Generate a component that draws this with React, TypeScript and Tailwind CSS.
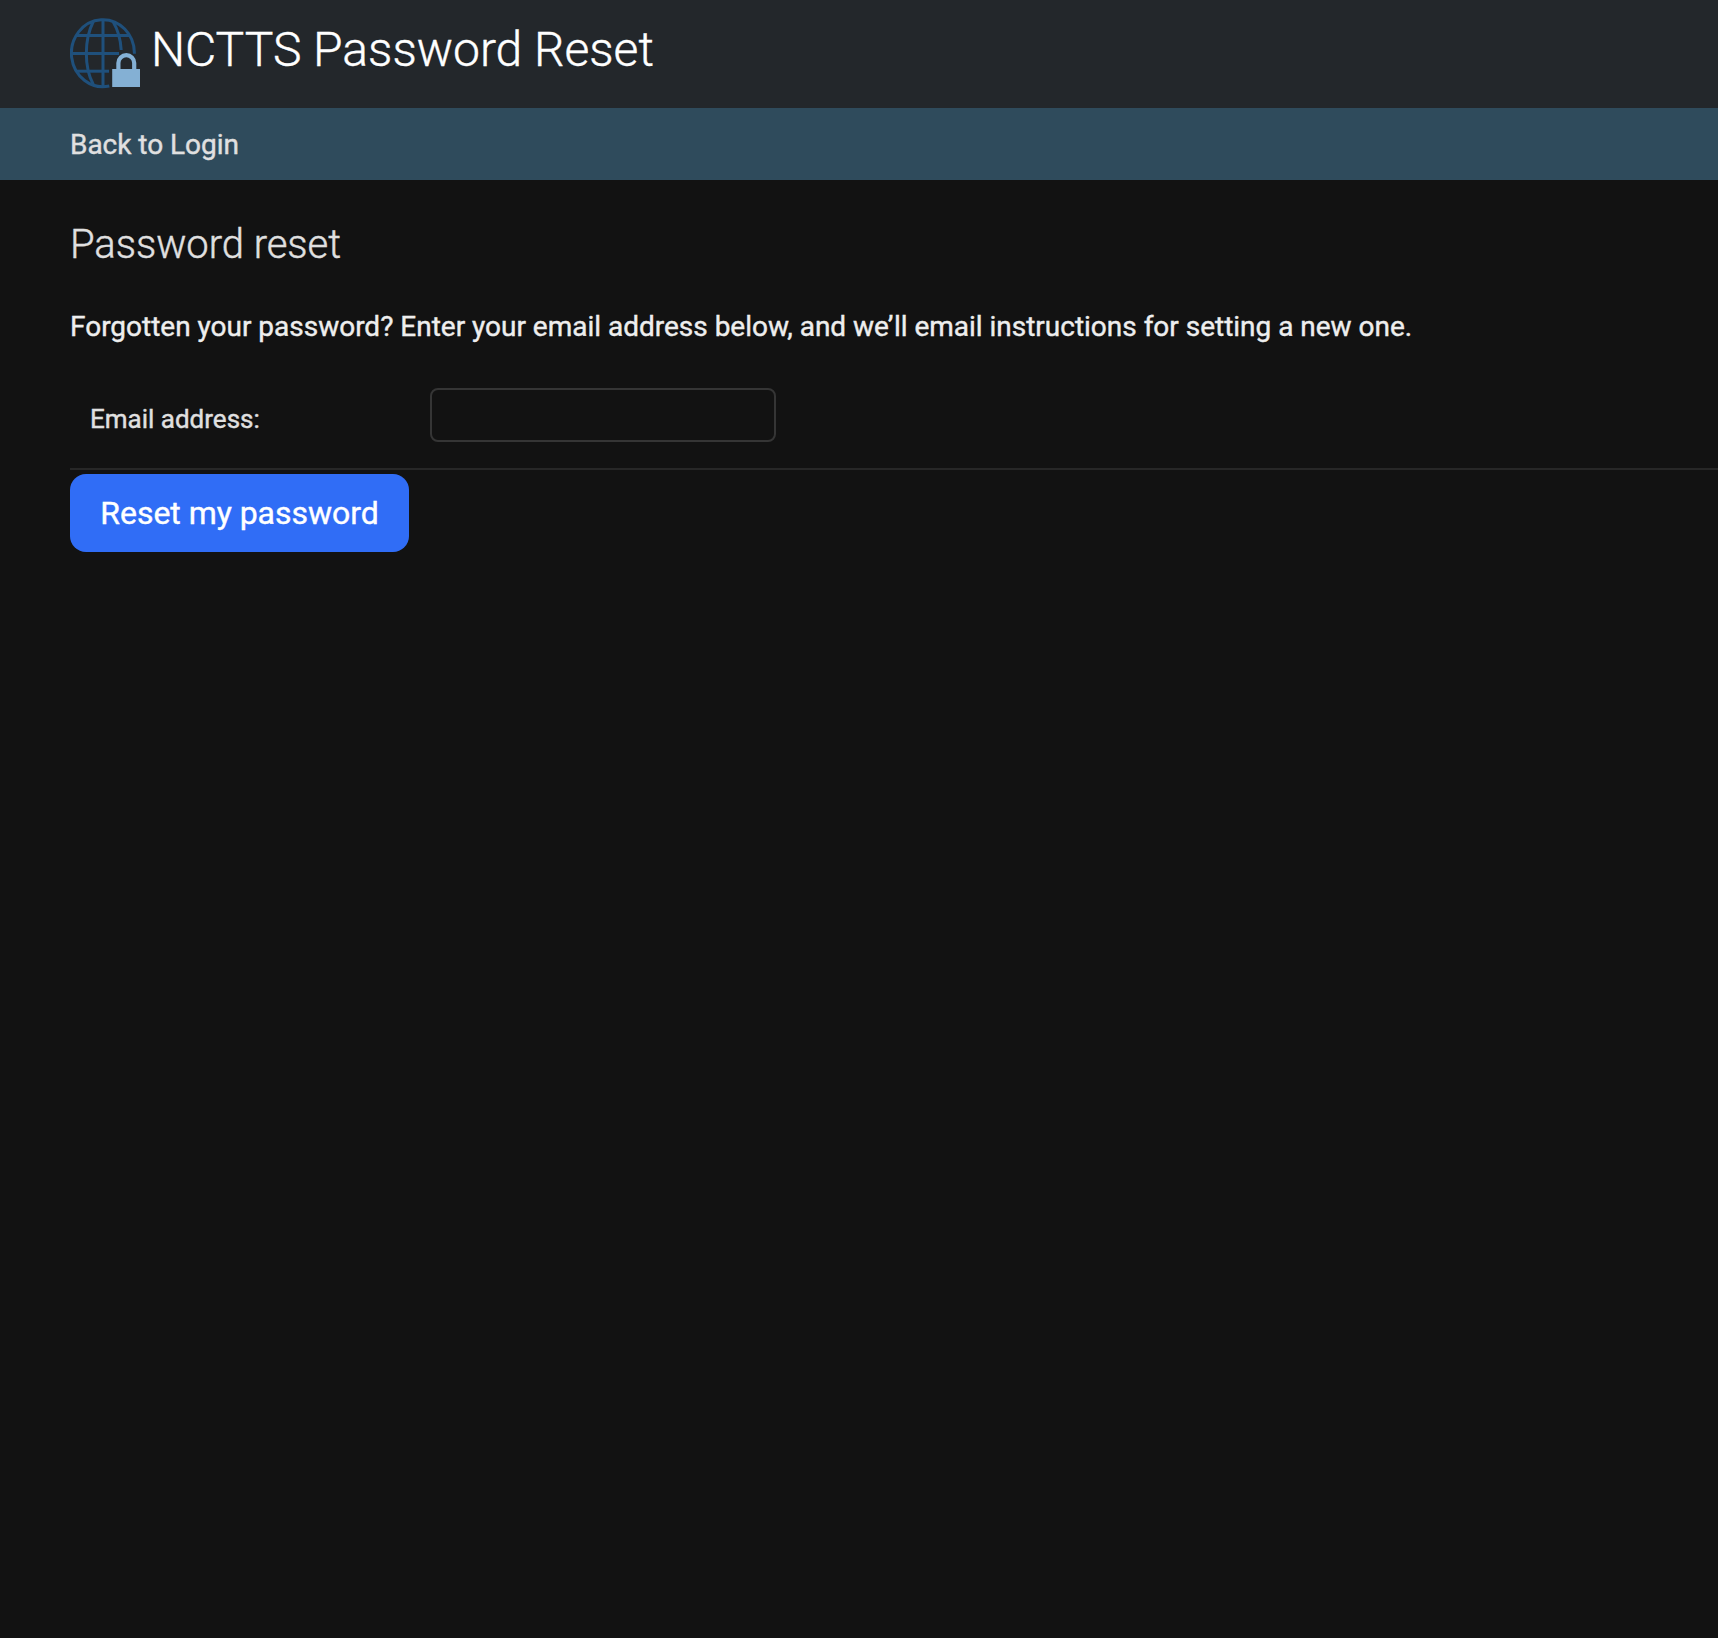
function GlobeLock() {
  return (
    <svg className="block h-[72px] w-[72px] shrink-0" viewBox="0 0 72 72" fill="none">
      <g stroke="#1f507c" strokeWidth="3">
        <path d="M39.3 69 A31.5 33.5 0 1 1 64.4 36.8" />
        <path d="M33 2 V70" />
        <path d="M23.3 4.5 C14 23 14 50 23.3 67.5" />
        <path d="M43 4.5 C48 13 50.6 22 51.2 33" />
        <path d="M7 18.6 H59" />
        <path d="M1 36.4 H49" />
        <path d="M7 54.2 H39" />
      </g>
      <path d="M48.4 54 V46 A7.9 7.9 0 0 1 64.2 46 V54" stroke="#84b0d4" strokeWidth="4.2" />
      <rect x="42.2" y="52" width="27.8" height="18" fill="#84b0d4" />
    </svg>
  );
}

export default function App() {
  return (
    <div className="min-h-screen bg-[#121212] font-['Roboto',sans-serif] text-[#eeeeee] [-webkit-text-stroke:0.4px_currentColor]">
      <header className="flex h-[108px] items-start bg-[#23272b] px-[70px] pt-[17px]">
        <GlobeLock />
        <h1 className="mt-[5px] ml-[9px] text-[48px] leading-[56px] font-light whitespace-nowrap text-white">
          NCTTS Password Reset
        </h1>
      </header>
      <nav className="flex h-[72px] items-center bg-[#2f4b5c] px-[70px] pt-[2px]">
        <a href="#" className="text-[28px] leading-[32px] tracking-[-0.03px] text-[#e0e0e0]">
          Back to Login
        </a>
      </nav>
      <main className="pt-[41px] pl-[70px]">
        <h2 className="text-[40px] leading-[48px] font-light tracking-[-0.05px] text-[#e0e0e0]">Password reset</h2>
        <p className="mt-[38px] text-[28px] leading-[40px] tracking-[-0.012px] whitespace-nowrap">
          Forgotten your password? Enter your email address below, and we’ll email instructions for
          setting a new one.
        </p>
        <form>
          <div className="mt-[41px] flex h-[82px] items-start border-b-2 border-[#272727] pl-[20px]">
            <label htmlFor="email" className="mt-[15px] w-[340px] text-[26px] leading-[32px] text-[#e0e0e0]">
              Email address:
            </label>
            <input
              id="email"
              type="email"
              className="h-[54px] w-[346px] rounded-[8px] border-2 border-[#353535] bg-[#121212] px-3 text-[26px] outline-none"
            />
          </div>
          <button
            type="button"
            className="mt-[4px] flex h-[78px] w-[339px] items-center justify-center rounded-[16px] bg-[#306df6] pb-[1px] text-[32px] leading-[38px] tracking-[-0.04px] whitespace-nowrap text-white"
          >
            Reset my password
          </button>
        </form>
      </main>
    </div>
  );
}
